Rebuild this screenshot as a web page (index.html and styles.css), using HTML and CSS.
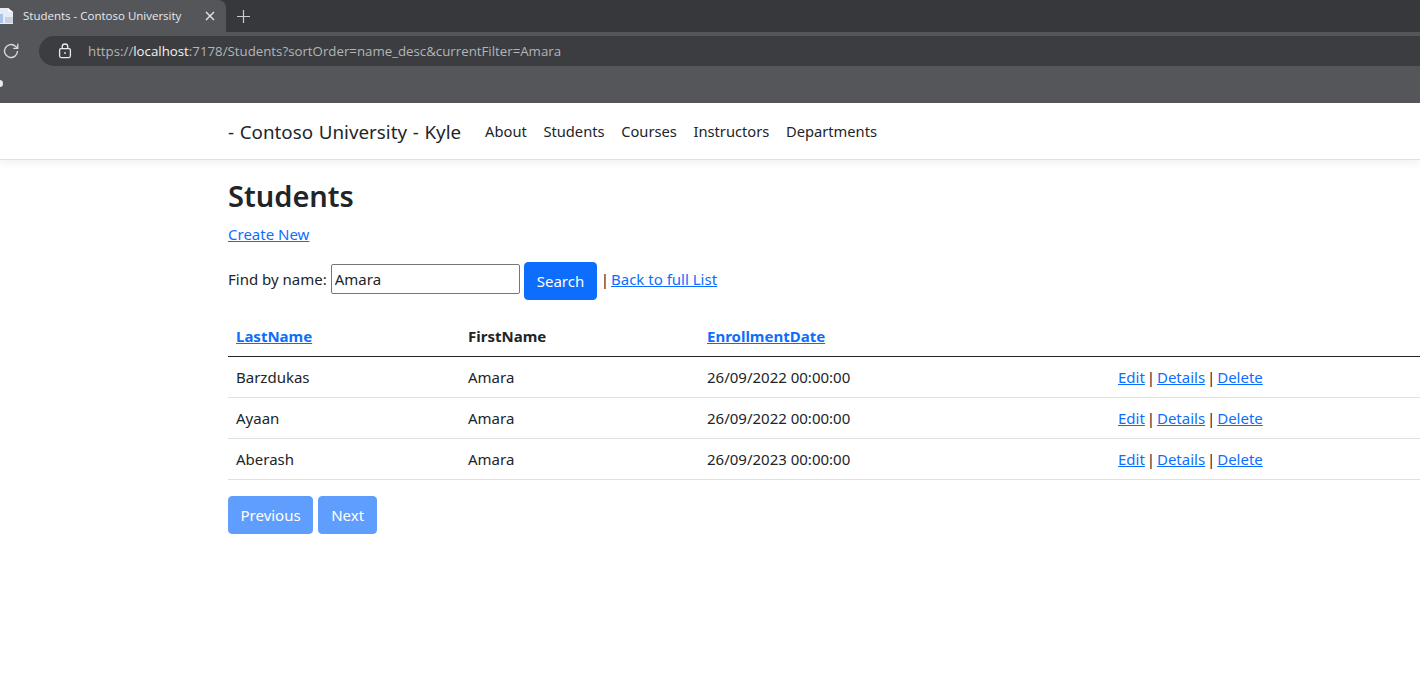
FILE: index.html
```html
<!DOCTYPE html>
<html lang="en">
<head>
<meta charset="utf-8">
<title>Students - Contoso University</title>
<link rel="stylesheet" href="styles.css">
</head>
<body>
<div class="browser">
  <div class="tabstrip">
    <div class="tab">
      <svg class="favicon" width="13" height="16" viewBox="0 0 13 16"><path d="M0 0h8l5 4v12H0z" fill="#e6ecf6"/><path d="M0 6h3v9H0z" fill="#a9c4e8"/><path d="M5 9h8v6H5z" fill="#c9d2de"/><path d="M8 0l5 4H8z" fill="#ffffff"/></svg>
      <span class="tab-title">Students - Contoso University</span>
      <svg class="tab-close" width="10" height="10" viewBox="0 0 10 10"><path d="M1 1l8 8M9 1l-8 8" stroke="#e8eaed" stroke-width="1.3" fill="none"/></svg>
    </div>
    <svg class="newtab" width="15" height="15" viewBox="0 0 15 15"><path d="M7.5 1v13M1 7.5h13" stroke="#c9cacc" stroke-width="1.2" fill="none"/></svg>
  </div>
  <div class="toolbar">
    <svg class="reload" width="18" height="18" viewBox="0 0 18 18"><path d="M15.5 9a6.5 6.5 0 1 1-2-4.7L15.5 6" stroke="#dcdde0" stroke-width="1.3" fill="none"/><path d="M15.8 1.8v4.6h-4.6" stroke="#dcdde0" stroke-width="1.3" fill="none"/></svg>
    <div class="omnibox">
      <svg class="lock" width="14" height="16" viewBox="0 0 14 16"><rect x="1.6" y="5.6" width="10.8" height="9" rx="1.5" stroke="#e8eaed" stroke-width="1.3" fill="none"/><path d="M4.2 5.6V3.8a2.8 2.8 0 0 1 5.6 0v1.8" stroke="#e8eaed" stroke-width="1.3" fill="none"/><rect x="6.2" y="9.2" width="1.6" height="1.6" fill="#e8eaed"/></svg>
      <span class="url">https://<b class="host">localhost</b>:7178/Students?sortOrder=name_desc&amp;currentFilter=Amara</span>
    </div>
  </div>
  <div class="bookmarks"><span class="bookmark-dot"></span></div>
</div>
<header class="navbar">
  <div class="container nav-inner">
    <a class="brand" href="#">- Contoso University - Kyle</a>
    <nav class="nav-links">
      <a href="#">About</a><a href="#">Students</a><a href="#">Courses</a><a href="#">Instructors</a><a href="#">Departments</a>
    </nav>
  </div>
</header>
<main class="container">
  <h1>Students</h1>
  <p class="create"><a href="#">Create New</a></p>
  <form class="find">
    <span class="find-label">Find by name:</span>
    <input class="find-input" type="text" value="Amara">
    <button class="btn" type="button">Search</button>
    <span class="find-sep">|</span>
    <a class="find-back" href="#">Back to full List</a>
  </form>
  <table class="table">
    <colgroup><col class="c1"><col class="c2"><col class="c3"><col class="c4"></colgroup>
    <thead>
      <tr><th><a href="#">LastName</a></th><th>FirstName</th><th><a href="#">EnrollmentDate</a></th><th></th></tr>
    </thead>
    <tbody>
      <tr><td>Barzdukas</td><td>Amara</td><td>26/09/2022 00:00:00</td><td class="actions"><a href="#">Edit</a> | <a href="#">Details</a> | <a href="#">Delete</a></td></tr>
      <tr><td>Ayaan</td><td>Amara</td><td>26/09/2022 00:00:00</td><td class="actions"><a href="#">Edit</a> | <a href="#">Details</a> | <a href="#">Delete</a></td></tr>
      <tr><td>Aberash</td><td>Amara</td><td>26/09/2023 00:00:00</td><td class="actions"><a href="#">Edit</a> | <a href="#">Details</a> | <a href="#">Delete</a></td></tr>
    </tbody>
  </table>
  <div class="pager">
    <a class="btn disabled" href="#">Previous</a>
    <a class="btn disabled btn-next" href="#">Next</a>
  </div>
</main>
</body>
</html>
```
FILE: styles.css
```css
html, body { margin: 0; height: 686px; overflow: hidden; background: #fff; }
body { font-family: "Noto Sans", "Open Sans", sans-serif; font-size: 15px; line-height: 24px; color: #212529; }
a { color: #0d6efd; }

.browser { height: 103px; background: #55565a; font-family: "Open Sans", sans-serif; color: #e8eaed; }
.tabstrip { height: 32px; background: #37383c; display: flex; align-items: center; }
.tab { width: 226px; height: 32px; background: #55565a; border-radius: 0 8px 0 0; display: flex; align-items: center; box-sizing: border-box; }
.favicon { margin: 0 10px 0 0; flex: none; }
.tab-title { font-size: 11.5px; flex: 1; white-space: nowrap; }
.tab-close { margin-right: 11px; }
.newtab { margin-left: 10px; }
.toolbar { height: 30px; margin-top: 4px; background: #55565a; display: flex; align-items: center; }
.reload { margin: 0 0 0 2px; flex: none; }
.omnibox { margin-left: 19px; flex: 1; height: 30px; background: #3c3d41; border-radius: 15px 0 0 15px; display: flex; align-items: center; }
.lock { margin-left: 19px; flex: none; }
.url { margin-left: 16px; font-size: 13.27px; color: #b3b5b8; white-space: nowrap; }
.host { font-weight: 400; color: #f1f3f4; }
.bookmarks { position: relative; height: 37px; }
.bookmark-dot { position: absolute; left: -3px; top: 14px; width: 6px; height: 7px; border-radius: 50%; background: #e8eaed; }

.container { padding-left: 228px; }
.navbar { height: 56px; background: #fff; border-bottom: 1px solid #dee2e6; box-shadow: 0 4px 8px rgba(0,0,0,.05); }
.nav-inner { display: flex; align-items: center; height: 56px; }
.brand { font-size: 18.8px; word-spacing: .8px; color: #212529; text-decoration: none; margin-right: 16px; white-space: nowrap; position: relative; top: 1px; }
.nav-links { display: flex; gap: .6px; font-size: 14.7px; }
.nav-links a { padding: 0 8px; color: #212529; text-decoration: none; white-space: nowrap; }

h1 { margin: 16px 0 6px; font-size: 29px; line-height: 40px; font-weight: 600; }
.create { margin: 0 0 16px; }
.find { display: flex; align-items: flex-start; height: 38px; }
.find-label { margin: 5px 4px 0 0; }
.find-input { width: 189px; height: 30px; box-sizing: border-box; border: 1px solid #767676; border-radius: 2px; padding: 0 3px; margin: 2px 4px 0 0; font: inherit; color: #212529; }
.btn { display: inline-block; box-sizing: border-box; height: 38px; padding: 0 11.5px; font: inherit; line-height: 36px; background: #0d6efd; color: #fff; border: 1px solid #0d6efd; border-radius: 4px; text-decoration: none; }
.find .btn { margin-right: 2px; padding: 0 12px; width: 73px; }
.find-sep { margin-top: 5px; margin-left: 2px; }
.find-back { margin: 5px 0 0 2px; }

.table { margin-top: 16px; width: 100%; max-width: 1192px; border-collapse: collapse; table-layout: fixed; }
.c1 { width: 232px; } .c2 { width: 239px; } .c3 { width: 411px; }
th, td { padding: 8px; text-align: left; height: 24px; border-bottom: 1px solid #dee2e6; }
th { font-weight: 700; border-bottom: 1px solid #212529; height: 23px; }
th a { font-weight: 700; }
.actions { word-spacing: -2px; }

.pager { display: flex; gap: 5px; margin-top: 16px; }
.btn.disabled { background: #5f9efd; border-color: #5f9efd; }
.btn-next { min-width: 59px; text-align: center; }
```
